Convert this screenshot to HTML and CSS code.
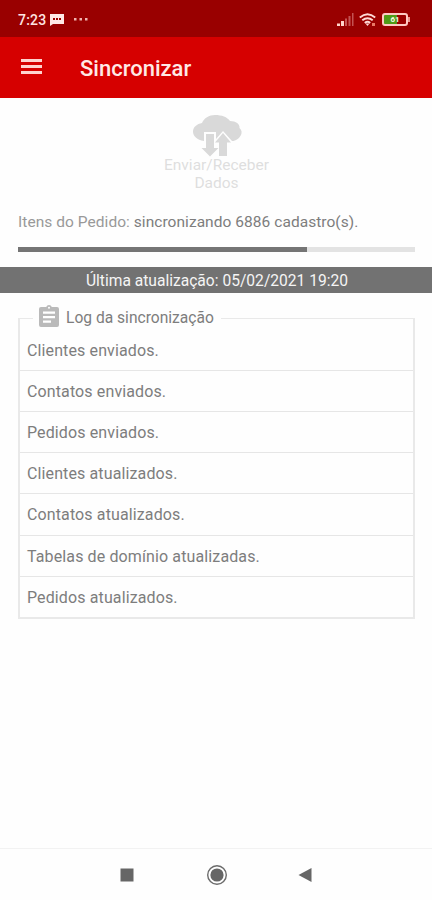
FILE: index.html
```html
<!DOCTYPE html>
<html lang="pt-BR">
<head>
<meta charset="utf-8">
<title>Sincronizar</title>
<link rel="stylesheet" href="styles.css">
</head>
<body>
<div class="status">
  <span class="time">7:23</span>
  <svg class="chat" width="14" height="12" viewBox="0 0 14 12"><path d="M0 0h14v10H3L0 12z" fill="#ffe9e6"/><path d="M3 4h2v2H3zM6 4h2v2H6zM9 4h2v2H9z" fill="#900"/></svg>
  <svg class="dots" width="16" height="4" viewBox="0 0 16 4"><path d="M1 1h2.500v2.500H1zM6.500 1H9v2.500H6.500zM12 1h2.500v2.500H12z" fill="#f0b5b0"/></svg>
  <svg class="signal" width="17" height="13" viewBox="0 0 17 13"><path d="M0 10.500h3V13H0zM4 8h3v5H4z" fill="#ffd5cc"/><path d="M8 5.500h2V13H8zM11.500 3h2v10h-2zM15 0h1.500v13H15z" fill="#c45252"/></svg>
  <svg class="wifi" width="18" height="14" viewBox="0 0 18 14"><g fill="none" stroke="#ffd9d6" stroke-width="1.900"><path d="M.8 4.500Q8.500-2 16.200 4.500M3.300 7.300q5.200-4.300 10.400 0M5.800 9.900q2.700-2.200 5.400 0"/></g><path d="M6.500 10.500h4l-2 2.500z" fill="#ffd9d6"/><path d="M13 10h3v3h-3z" fill="#e97866"/></svg>
  <div class="battery"><div class="cell"><span>61</span></div><i></i></div>
</div>
<header class="appbar">
  <div class="menu"><i></i><i></i><i></i></div>
  <h1>Sincronizar</h1>
</header>
<main>
  <div class="sync">
    <svg width="50" height="42" viewBox="0 0 50 42"><path d="M12 26C5 25 1 21 1 16.500 1 12 5 9 10 8 12 3 17 0 23 0c7 0 12 2 15 6 6 0 10 3 9.500 7 2.500 2 2.500 5 1.500 7-2 3.500-5 6-9 6L31 16 24 24V17H12z" fill="#d9d9d9"/><path d="M14 19h8v14h4.500L18 41.500 9.500 33H14zM31 18l8 9.500h-4V41h-8V27.500h-4z" fill="#d9d9d9"/></svg>
    <div>Enviar/Receber<br>Dados</div>
  </div>
  <p class="progress-text"><span>Itens do Pedido:</span> sincronizando 6886 cadastro(s).</p>
  <div class="progress"><div></div></div>
  <div class="updated">Última atualização: 05/02/2021 19:20</div>
  <fieldset class="log">
    <legend><svg width="20" height="22" viewBox="0 0 20 22"><path d="M2 2h5.200a3 3 0 0 1 5.600 0H18q2 0 2 2v16q0 2-2 2H2q-2 0-2-2V4q0-2 2-2z" fill="#bababa"/><path d="M4 6.500h12v2.200H4zM4 11h12v2.200H4zM4 15.500h8v2.200H4z" fill="#fff"/><circle cx="10" cy="2.800" r="1" fill="#fff"/></svg><span>Log da sincronização</span></legend>
    <ul>
      <li>Clientes enviados.</li>
      <li>Contatos enviados.</li>
      <li>Pedidos enviados.</li>
      <li>Clientes atualizados.</li>
      <li>Contatos atualizados.</li>
      <li>Tabelas de domínio atualizadas.</li>
      <li>Pedidos atualizados.</li>
    </ul>
  </fieldset>
</main>
<nav>
  <svg width="14" height="14" viewBox="0 0 14 14"><path d="M.5.500h13v13H.5z" fill="#666"/></svg>
  <svg class="home" width="22" height="22" viewBox="0 0 22 22"><circle cx="11" cy="11" r="9.300" fill="none" stroke="#6b6b6b" stroke-width="1.400"/><circle cx="11" cy="11" r="6.600" fill="#666"/></svg>
  <svg width="14" height="16" viewBox="0 0 14 16"><path d="M13.500 1v14L.5 8z" fill="#666"/></svg>
</nav>
</body>
</html>
```
FILE: styles.css
```css
* { box-sizing: border-box; }
body {
  margin: 0;
  width: 432px;
  height: 900px;
  display: flex;
  flex-direction: column;
  overflow: hidden;
  background: #fefefe;
  color: #7d7d7d;
  font: 16px/20px Roboto, sans-serif;
}
svg { display: block; flex: none; }
.status {
  height: 37px;
  flex: none;
  display: flex;
  align-items: center;
  padding: 2px 22px 0 18px;
  background: #990000;
}
.time { width: 32px; color: #ffe5e2; font-size: 14px; font-weight: 500; letter-spacing: .2px; }
.chat { margin-top: 1px; }
.dots { margin-left: 9px; margin-top: -2px; }
.signal { margin-left: auto; }
.wifi { margin-left: 5px; margin-right: 1px; }
.battery { display: flex; align-items: center; margin-left: 4px; }
.cell {
  width: 26px;
  height: 13px;
  border: 2px solid #ffc9c3;
  border-radius: 3px;
  background: linear-gradient(90deg, #4f9b16 13px, #900 13px);
  color: #f3ffe8;
  font-size: 8px;
  font-weight: 700;
  line-height: 9px;
  text-align: center;
}
.battery i { width: 2px; height: 5px; background: #e9928c; }
.appbar {
  height: 60.500px;
  flex: none;
  display: flex;
  align-items: center;
  padding: 3px 21px 0;
  background: #d60000;
  color: #ffe9e6;
}
.menu { width: 21px; display: flex; flex-direction: column; gap: 3px; margin-top: -4px; }
.menu i { height: 3px; background: #ffd3cf; }
h1 { margin: 0 0 0 38px; font-size: 22px; line-height: 26px; font-weight: 500; }
main { flex: 1; }
.sync {
  padding: 17px 0 0 1px;
  display: flex;
  flex-direction: column;
  align-items: center;
  color: #dedede;
  font-size: 15.500px;
  line-height: 18.500px;
  text-align: center;
}
.sync div { margin-top: -1px; }
.progress-text { margin: 19px 0 0 18px; font-size: 15.500px; letter-spacing: .05px; white-space: nowrap; }
.progress-text span { color: #999; }
.progress { margin: 15px 17px 0 18px; height: 5px; background: #e3e3e3; }
.progress div { width: 289px; height: 5px; background: #757575; }
.updated {
  margin-top: 15px;
  height: 26px;
  padding-left: 2px;
  background: #727272;
  color: #f5f5f5;
  font-size: 15.600px;
  line-height: 29px;
  text-align: center;
}
.log { margin: 13px 17px 0 18px; padding: 0; border: 2px solid #e9e9e9; border-top-width: 1px; }
legend { height: 26px; margin-left: 13px; padding: 0 7px 2px 6px; display: flex; align-items: center; font-size: 15.600px; }
legend svg { margin-top: -3px; }
legend span { margin-left: 7px; }
ul { margin: 0; padding: 0; list-style: none; }
li { height: 41.300px; padding: 1px 7px 0; line-height: 40px; border-bottom: 1px solid #e6e6e6; letter-spacing: .12px; }
li:first-child { height: 41px; margin-top: -2px; }
li:last-child { border: 0; height: 40px; }
nav {
  height: 52px;
  flex: none;
  border-top: 1px solid #f2f2f2;
  display: flex;
  align-items: center;
  justify-content: space-between;
  padding: 0 120px;
}
.home { margin-left: 2px; }
```
